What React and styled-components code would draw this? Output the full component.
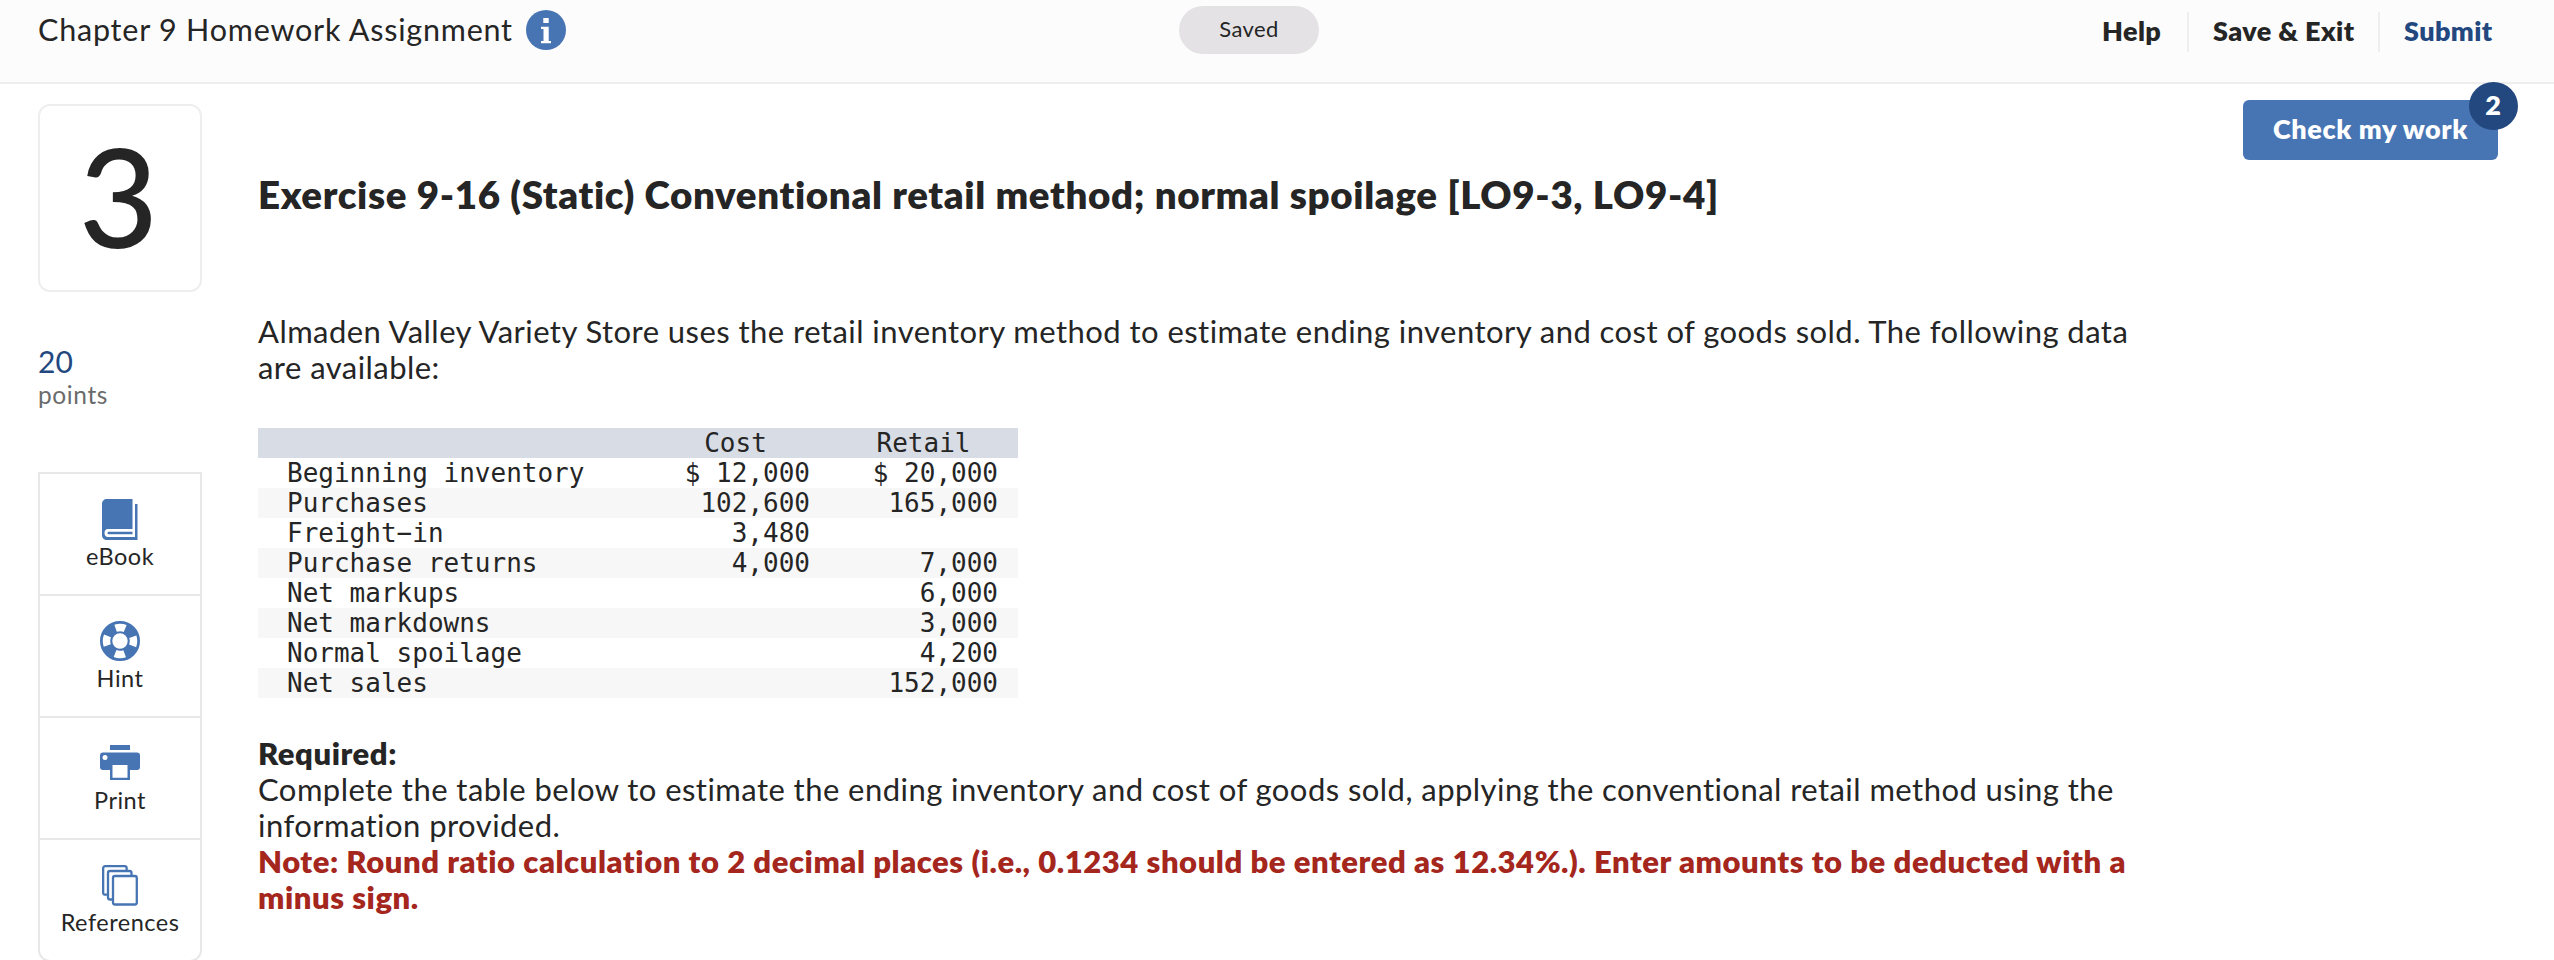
import React from 'react'
import styled, { createGlobalStyle } from 'styled-components'

const tableRows = [
    { label: 'Beginning inventory', cost: '$ 12,000', retail: '$ 20,000' },
    { label: 'Purchases', cost: '102,600', retail: '165,000' },
    { label: 'Freight−in', cost: '3,480', retail: '' },
    { label: 'Purchase returns', cost: '4,000', retail: '7,000' },
    { label: 'Net markups', cost: '', retail: '6,000' },
    { label: 'Net markdowns', cost: '', retail: '3,000' },
    { label: 'Normal spoilage', cost: '', retail: '4,200' },
    { label: 'Net sales', cost: '', retail: '152,000' },
]

const BookIcon = () => (
    <svg width="36" height="41" viewBox="0 0 36 41">
        <path fill="#4775b4" d="M5 0H30.500V30H6C3.500 30 2.500 32 2.500 34S3.500 38 6 38H33V5H35.500V41H5C1.500 41 0 38.500 0 36V5C0 2 2 0 5 0Z" />
        <path fill="#4775b4" d="M6.500 32.700H30.500V35.200H6.500C5 35.200 5 32.700 6.500 32.700Z" />
    </svg>
)

const HintIcon = () => (
    <svg width="40" height="40" viewBox="0 0 40 40">
        <circle cx="20" cy="20" r="13.85" fill="none" stroke="#4775b4" strokeWidth="12.3" />
        <circle cx="20" cy="20" r="13.5" fill="none" stroke="#fff" strokeWidth="7.5" strokeDasharray="9.8 11.406" strokeDashoffset="4.9" />
    </svg>
)

const PrintIcon = () => (
    <svg width="40" height="36" viewBox="0 0 40 36">
        <path fill="#4775b4" d="M10 0H30V5H10Z" />
        <path fill="#4775b4" fillRule="evenodd" d="M3 7.500H37Q40 7.500 40 10.500V22Q40 25 37 25H30V35H10V25H3Q0 25 0 22V10.500Q0 7.500 3 7.500ZM12.500 20V32.700H27.500V20ZM5 10A2.500 2.500 0 1 0 5 15A2.500 2.500 0 1 0 5 10Z" />
    </svg>
)

const ReferencesIcon = () => (
    <svg width="36" height="41" viewBox="0 0 36 41">
        <g fill="#fff" stroke="#4775b4" strokeWidth="2.3">
            <rect x="1.15" y="1.15" width="23.5" height="28.5" rx="2" />
            <rect x="6" y="6" width="23.5" height="28.5" rx="2" />
            <rect x="11" y="11" width="23.8" height="28.5" rx="2" />
        </g>
    </svg>
)

const InfoIcon = () => (
    <svg width="40" height="40" viewBox="0 0 40 40">
        <circle cx="20" cy="20" r="20" fill="#4775b4" />
        <path fill="#fff" d="M17.300 8H22.700V13H17.300ZM15 16.700H22.700V31H25V33.300H15V31H17.500V19H15Z" />
    </svg>
)

const tools = [
    { name: 'eBook', Icon: BookIcon },
    { name: 'Hint', Icon: HintIcon },
    { name: 'Print', Icon: PrintIcon },
    { name: 'References', Icon: ReferencesIcon },
]

const App = () => {
    return (
        <Page>
            <GlobalStyle />
            <Header>
                <HeaderLeft>
                    <Title>Chapter 9 Homework Assignment</Title>
                    <InfoIcon />
                </HeaderLeft>
                <SavedPill>Saved</SavedPill>
                <HeaderRight>
                    <HeaderLink>Help</HeaderLink>
                    <HeaderLink>Save &amp; Exit</HeaderLink>
                    <HeaderLink $primary>Submit</HeaderLink>
                </HeaderRight>
            </Header>

            <Main>
                <Sidebar>
                    <QuestionNumber>3</QuestionNumber>
                    <Points>
                        <b>20</b>
                        <span>points</span>
                    </Points>
                    <ToolList>
                        {tools.map(({ name, Icon }) => (
                            <Tool key={name}>
                                <div className="icon"><Icon /></div>
                                <p>{name}</p>
                            </Tool>
                        ))}
                    </ToolList>
                </Sidebar>

                <Content>
                    <Heading>Exercise 9-16 (Static) Conventional retail method; normal spoilage [LO9-3, LO9-4]</Heading>
                    <Paragraph>
                        <Line>Almaden Valley Variety Store uses the retail inventory method to estimate ending inventory and cost of goods sold. The following data</Line>
                        <Line>are available:</Line>
                    </Paragraph>
                    <Table>
                        <thead>
                            <tr>
                                <th className="label" />
                                <th className="cost">Cost</th>
                                <th>Retail</th>
                            </tr>
                        </thead>
                        <tbody>
                            {tableRows.map((row) => (
                                <tr key={row.label}>
                                    <td>{row.label}</td>
                                    <td>{row.cost}</td>
                                    <td>{row.retail}</td>
                                </tr>
                            ))}
                        </tbody>
                    </Table>
                    <Paragraph>
                        <Line $bold>Required:</Line>
                        <Line>Complete the table below to estimate the ending inventory and cost of goods sold, applying the conventional retail method using the</Line>
                        <Line>information provided.</Line>
                        <Line $bold $note>Note: Round ratio calculation to 2 decimal places (i.e., 0.1234 should be entered as 12.34%.). Enter amounts to be deducted with a</Line>
                        <Line $bold $note>minus sign.</Line>
                    </Paragraph>
                </Content>

                <CheckButton>
                    Check my work
                    <Badge>2</Badge>
                </CheckButton>
            </Main>
        </Page>
    )
}
export default App


const GlobalStyle = createGlobalStyle`
    * {
        box-sizing: border-box;
    }
    body {
        margin: 0;
        background: #fff;
        color: #252525;
        font-family: Lato, sans-serif;
    }
    h1, h2, p {
        margin: 0;
    }
    svg {
        display: block;
    }
`

const Page = styled.div`
    width: 100%;
    height: 960px;
    overflow: hidden;
`

const Header = styled.header`
    display: grid;
    grid-template-columns: 1141px 140px 1fr;
    align-items: start;
    height: 84px;
    padding: 6px 56px 0 38px;
    background: #fcfcfc;
    border-bottom: 2px solid #eeeeee;
`

const HeaderLeft = styled.div`
    display: flex;
    align-items: center;
    gap: 13px;
    height: 48px;
`

const Title = styled.h1`
    padding-bottom: 3px;
    font-size: 30.5px;
    font-weight: 400;
    letter-spacing: 0.79px;
    white-space: nowrap;
`

const SavedPill = styled.div`
    height: 48px;
    border-radius: 24px;
    background: #e4e2e5;
    font-size: 22px;
    letter-spacing: 0.4px;
    line-height: 45px;
    text-align: center;
`

const HeaderRight = styled.nav`
    display: flex;
    justify-content: flex-end;
    margin-top: 6px;
`

const HeaderLink = styled.a`
    height: 40px;
    width: 191px;
    padding-left: 24px;
    border-right: ${({ $primary }) => ($primary ? 'none' : '2px solid #eeeeee')};
    color: ${({ $primary }) => ($primary ? '#23487f' : '#252525')};
    font-size: 27px;
    font-weight: 800;
    letter-spacing: 0.4px;
    line-height: 37px;
    white-space: nowrap;
    &:first-child {
        width: 87px;
        padding-left: 0;
    }
    &:last-child {
        width: 118px;
    }
`

const Main = styled.main`
    display: flex;
    align-items: flex-start;
    height: 876px;
    padding: 0 56px 0 38px;
`

const Sidebar = styled.aside`
    width: 164px;
    margin-top: 20px;
`

const QuestionNumber = styled.div`
    height: 188px;
    padding-right: 3px;
    border: 2px solid #eeeeee;
    border-radius: 12px;
    font-size: 137px;
    font-weight: 500;
    line-height: 178px;
    text-align: center;
`

const Points = styled.div`
    display: flex;
    flex-direction: column;
    height: 180px;
    padding-top: 51px;
    b {
        color: #23487f;
        font-size: 30px;
        font-weight: 400;
        line-height: 36px;
    }
    span {
        color: #6b6b6b;
        font-size: 24.5px;
        letter-spacing: 0.6px;
        line-height: 32px;
    }
`

const ToolList = styled.div`
    border: 2px solid #e8e8e8;
    border-radius: 0 0 12px 12px;
`

const Tool = styled.div`
    display: flex;
    flex-direction: column;
    align-items: center;
    height: 122px;
    padding-top: 20px;
    border-bottom: 2px solid #e8e8e8;
    .icon {
        display: flex;
        align-items: center;
        height: 50px;
    }
    p {
        font-size: 23.5px;
        letter-spacing: 0.5px;
        line-height: 24px;
    }
    &:last-child {
        height: 120px;
        border-bottom: none;
    }
`

const Content = styled.section`
    flex: 1;
    margin-left: 56px;
    padding-top: 87px;
`

const Heading = styled.h2`
    height: 142px;
    font-size: 38.5px;
    font-weight: 800;
    letter-spacing: 0.64px;
    line-height: 46px;
    white-space: nowrap;
`

const Paragraph = styled.div`
    font-size: 31px;
    line-height: 36px;
`

const Line = styled.p`
    color: ${({ $note }) => ($note ? '#a4261d' : 'inherit')};
    font-weight: ${({ $bold }) => ($bold ? 800 : 400)};
    letter-spacing: ${({ $bold }) => ($bold ? 0.54 : 0.45)}px;
    white-space: nowrap;
`

const Table = styled.table`
    width: 760px;
    margin: 43px 0 37px;
    border-collapse: collapse;
    table-layout: fixed;
    font-family: "DejaVu Sans Mono", monospace;
    font-size: 26px;
    line-height: 30px;
    tr {
        height: 30px;
    }
    th, td {
        height: 30px;
        padding: 0;
        font-weight: 400;
        white-space: nowrap;
    }
    thead tr {
        background: #d8dce5;
    }
    tbody tr:nth-child(even) {
        background: #f7f7f7;
    }
    .label {
        width: 384px;
    }
    .cost {
        width: 187px;
    }
    td {
        padding-right: 19px;
        text-align: right;
    }
    td:last-child {
        padding-right: 20px;
    }
    td:first-child {
        padding-left: 29px;
        text-align: left;
    }
`

const CheckButton = styled.button`
    position: relative;
    width: 255px;
    height: 60px;
    margin-top: 16px;
    padding: 0 0 4px;
    border: none;
    border-radius: 6px;
    background: #4775b4;
    color: #fff;
    font-family: inherit;
    font-size: 27px;
    font-weight: 800;
    letter-spacing: 0.6px;
    white-space: nowrap;
`

const Badge = styled.span`
    position: absolute;
    top: -18px;
    right: -20px;
    width: 49px;
    height: 48px;
    border-radius: 50%;
    background: #23487f;
    font-size: 27px;
    line-height: 46px;
    text-align: center;
`
